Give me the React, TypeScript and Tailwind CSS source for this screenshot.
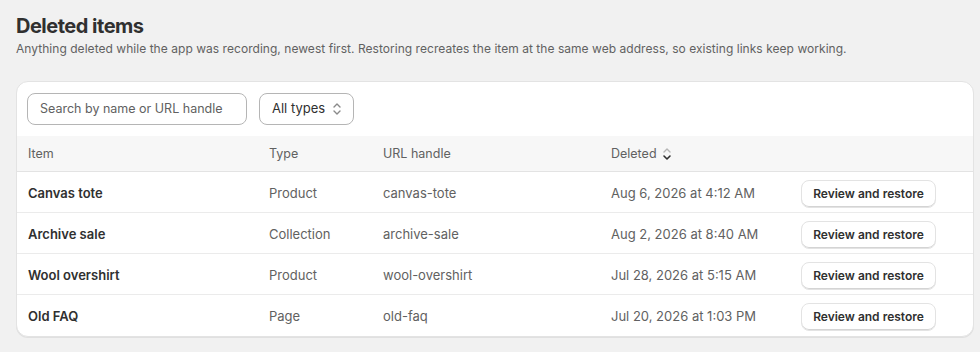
import React from 'react';

interface DeletedItem {
  name: string;
  type: string;
  handle: string;
  deleted: string;
}

const ITEMS: DeletedItem[] = [
  { name: 'Canvas tote', type: 'Product', handle: 'canvas-tote', deleted: 'Aug 6, 2026 at 4:12 AM' },
  { name: 'Archive sale', type: 'Collection', handle: 'archive-sale', deleted: 'Aug 2, 2026 at 8:40 AM' },
  { name: 'Wool overshirt', type: 'Product', handle: 'wool-overshirt', deleted: 'Jul 28, 2026 at 5:15 AM' },
  { name: 'Old FAQ', type: 'Page', handle: 'old-faq', deleted: 'Jul 20, 2026 at 1:03 PM' },
];

// Up/down chevrons used by the select and the sortable column
const SelectIcon = () => (
  <svg width="12" height="14" viewBox="0 0 12 14" fill="none" className="shrink-0">
    <path d="M3 5l3-3 3 3" stroke="#8a8a8a" strokeWidth="1.4" strokeLinecap="round" strokeLinejoin="round" />
    <path d="M3 9l3 3 3-3" stroke="#8a8a8a" strokeWidth="1.4" strokeLinecap="round" strokeLinejoin="round" />
  </svg>
);

const SortIcon = () => (
  <svg width="12" height="14" viewBox="0 0 12 14" fill="none" className="shrink-0">
    <path d="M3 5l3-3 3 3" stroke="#b5b5b5" strokeWidth="1.4" strokeLinecap="round" strokeLinejoin="round" />
    <path d="M3 9l3 3 3-3" stroke="#303030" strokeWidth="1.6" strokeLinecap="round" strokeLinejoin="round" />
  </svg>
);

const gridCols = 'grid grid-cols-[241px_114px_228px_190px_1fr] items-center pl-[11px] pr-[39px]';

const App: React.FC = () => {
  return (
    <div className="min-h-[352px] w-[980px] bg-[#f1f1f1] font-['Inter','Liberation_Sans',sans-serif] text-[13px] text-[#303030]">
      <div className="px-4 pt-[13px]">
        <h1 className="text-[20px] font-bold leading-[26px] tracking-[-0.5px] text-[#303030]">Deleted items</h1>
        <p className="mt-0 text-[12px] leading-[20px] tracking-[0.04px] text-[#616161]">
          Anything deleted while the app was recording, newest first. Restoring recreates the item at the same web address, so existing links keep working.
        </p>

        <div className="mt-[22px] w-[958px] overflow-hidden rounded-xl border border-[#e3e3e3] bg-white shadow-[0_1px_0_rgba(0,0,0,0.07)]">
          <div className="flex items-center gap-3 px-[10px] pb-[11px] pt-[11px]">
            <div className="flex h-8 w-[220px] items-center rounded-lg border border-[#b5b5b5] px-3 text-[12.5px] text-[#616161]">
              Search by name or URL handle
            </div>
            <div className="flex h-8 items-center gap-[6px] rounded-lg border border-[#b5b5b5] pl-3 pr-[10px] text-[#303030]">
              <span>All types</span>
              <SelectIcon />
            </div>
          </div>

          <div className={`${gridCols} h-[36px] border-b border-[#e3e3e3] bg-[#f7f7f7] pt-px text-[12.5px] text-[#616161]`}>
            <span>Item</span>
            <span>Type</span>
            <span>URL handle</span>
            <span className="flex items-center gap-1">
              Deleted
              <SortIcon />
            </span>
            <span />
          </div>

          {ITEMS.map((item, i) => (
            <div
              key={item.handle}
              className={`${gridCols} h-[41px] pt-[3px] ${i < ITEMS.length - 1 ? 'border-b border-[#ebebeb]' : ''}`}
            >
              <span className="font-semibold text-[#303030]">{item.name}</span>
              <span className="text-[#616161]">{item.type}</span>
              <span className="text-[#616161]">{item.handle}</span>
              <span className="text-[#616161]">{item.deleted}</span>
              <div className="flex justify-end">
                <button className="h-[28px] w-[135px] rounded-lg border border-[#e3e3e3] bg-white text-[12px] font-semibold text-[#303030] shadow-[inset_0_-1px_0_#d4d4d4]">
                  Review and restore
                </button>
              </div>
            </div>
          ))}
        </div>
      </div>
    </div>
  );
};

export default App;
